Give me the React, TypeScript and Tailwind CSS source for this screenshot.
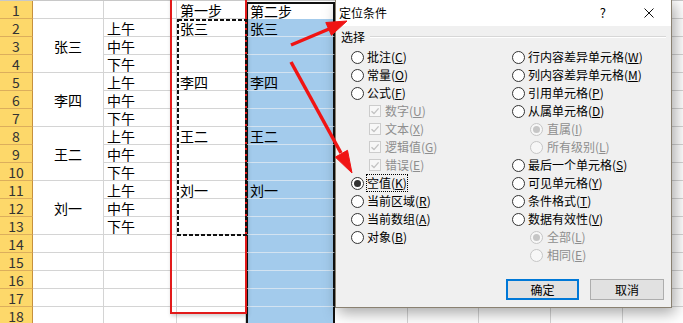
import clsx from 'clsx'

const names: Record<number, string> = { 2: '张三', 5: '李四', 8: '王二', 11: '刘一' }
const halves = ['上午', '中午', '下午']

function Radio({ checked, disabled }: { checked?: boolean; disabled?: boolean }) {
  return (
    <span
      className={clsx(
        'flex h-[13px] w-[13px] shrink-0 items-center justify-center rounded-full border',
        disabled ? 'border-[#c6c6c6] bg-[#f7f7f7]' : 'border-[#333] bg-white'
      )}
    >
      {checked && <span className={clsx('h-[7px] w-[7px] rounded-full', disabled ? 'bg-[#c6c6c6]' : 'bg-[#333]')} />}
    </span>
  )
}

function Check() {
  return (
    <span className="flex h-[12px] w-[12px] shrink-0 items-center justify-center border border-[#cccccc] bg-[#f7f7f7]">
      <svg width="10" height="10" viewBox="0 0 10 10">
        <path d="M1.5 5.2 L4 7.6 L8.6 2.4" fill="none" stroke="#c2c2c2" strokeWidth="1.4" />
      </svg>
    </span>
  )
}

function Label({ text, k, disabled, focus }: { text: string; k: string; disabled?: boolean; focus?: boolean }) {
  return (
    <span className={clsx('whitespace-nowrap leading-[16px]', disabled && 'text-[#8e8e8e]', focus && 'outline outline-1 outline-dotted outline-black')}>
      {text}(<span className="underline">{k}</span>)
    </span>
  )
}

type Opt = { text: string; k: string; kind: 'radio' | 'check' | 'sub'; checked?: boolean; disabled?: boolean; focus?: boolean }

const leftOpts: Opt[] = [
  { text: '批注', k: 'C', kind: 'radio' },
  { text: '常量', k: 'O', kind: 'radio' },
  { text: '公式', k: 'F', kind: 'radio' },
  { text: '数字', k: 'U', kind: 'check', disabled: true },
  { text: '文本', k: 'X', kind: 'check', disabled: true },
  { text: '逻辑值', k: 'G', kind: 'check', disabled: true },
  { text: '错误', k: 'E', kind: 'check', disabled: true },
  { text: '空值', k: 'K', kind: 'radio', checked: true, focus: true },
  { text: '当前区域', k: 'R', kind: 'radio' },
  { text: '当前数组', k: 'A', kind: 'radio' },
  { text: '对象', k: 'B', kind: 'radio' },
]

const rightOpts: Opt[] = [
  { text: '行内容差异单元格', k: 'W', kind: 'radio' },
  { text: '列内容差异单元格', k: 'M', kind: 'radio' },
  { text: '引用单元格', k: 'P', kind: 'radio' },
  { text: '从属单元格', k: 'D', kind: 'radio' },
  { text: '直属', k: 'I', kind: 'sub', checked: true, disabled: true },
  { text: '所有级别', k: 'L', kind: 'sub', disabled: true },
  { text: '最后一个单元格', k: 'S', kind: 'radio' },
  { text: '可见单元格', k: 'Y', kind: 'radio' },
  { text: '条件格式', k: 'T', kind: 'radio' },
  { text: '数据有效性', k: 'V', kind: 'radio' },
  { text: '全部', k: 'L', kind: 'sub', checked: true, disabled: true },
  { text: '相同', k: 'E', kind: 'sub', disabled: true },
]

function OptRow({ o }: { o: Opt }) {
  return (
    <div className={clsx('flex h-[18px] items-center', o.kind === 'radio' ? 'gap-[3px]' : 'gap-[4px] pl-[18px]')}>
      {o.kind === 'check' ? <Check /> : <Radio checked={o.checked} disabled={o.disabled} />}
      <Label text={o.text} k={o.k} disabled={o.disabled} focus={o.focus} />
    </div>
  )
}

function Sheet() {
  const cells: React.ReactNode[] = []
  for (let r = 1; r <= 18; r++) {
    cells.push(
      <div key={`h${r}`} className="flex items-end justify-center border-r border-b border-r-[#c6903e] border-b-[#dcae5c] bg-[#fdd86a] text-[14px] leading-[16px] text-[#333]">
        {r}
      </div>
    )
    if (names[r]) {
      cells.push(
        <div key={`a${r}`} className="row-span-3 flex items-center justify-center border-r border-b border-[#d4d4d4] leading-[16px]">
          {names[r]}
        </div>
      )
    } else if (r === 1 || r >= 14) {
      cells.push(<div key={`a${r}`} className="border-r border-b border-[#d4d4d4]" />)
    }
    cells.push(
      <div key={`b${r}`} className="flex items-end border-r border-b border-[#d4d4d4] pl-[3px] leading-[16px]">
        {r >= 2 && r <= 13 ? halves[(r - 2) % 3] : ''}
      </div>
    )
    cells.push(
      <div key={`c${r}`} className="flex items-end border-r border-b border-[#d4d4d4] pl-[3px] leading-[16px]">
        {r === 1 ? '第一步' : names[r] ?? ''}
      </div>
    )
    cells.push(
      <div
        key={`d${r}`}
        className={clsx(
          'flex items-end border-x-2 border-x-[#111] pl-[2px]',
          r === 1 ? 'mt-[1px] border-t-2 border-t-[#111] bg-white leading-[15px]' : 'border-b border-b-[#d3e3f1] bg-[#a3cbec] leading-[16px]'
        )}
      >
        {r === 1 ? '第二步' : names[r] ?? ''}
      </div>
    )
    for (let c = 0; c < 5; c++) {
      cells.push(<div key={`x${r}-${c}`} className="border-r border-b border-[#d4d4d4]" />)
    }
  }
  return (
    <div className="grid grid-cols-[33px_71px_73px_69px_89px_73px_71px_72px_72px_72px] grid-rows-[repeat(18,18px)] border-t border-[#c8c8c8] text-[14px] text-black">
      {cells}
    </div>
  )
}

function Dialog() {
  return (
    <div className="absolute left-[335px] top-[-1px] z-10 flex h-[309px] w-[337px] flex-col border border-[#8a8171] bg-[#f0f0f0] text-[12px] text-black shadow-[3px_5px_14px_rgba(0,0,0,0.35)]">
      <div className="flex h-[26px] items-center bg-white pl-[3px]">
        <span className="leading-[16px]">定位条件</span>
        <span className="ml-auto mr-[38px] text-[13px] leading-[16px]">?</span>
        <svg width="10" height="10" viewBox="0 0 10 10" className="mr-[17px]">
          <path d="M0.5 0.5 L9.5 9.5 M9.5 0.5 L0.5 9.5" stroke="#111" strokeWidth="1" />
        </svg>
      </div>
      <div className="mx-[5px] mt-[3px] flex h-[16px] items-center gap-[5px]">
        <span className="leading-[16px]">选择</span>
        <div className="h-[2px] flex-1 border-t border-b border-t-[#d7d7d7] border-b-white" />
      </div>
      <div className="mt-[3px] flex pl-[15px]">
        <div className="flex w-[161px] flex-col">
          {leftOpts.map((o) => <OptRow key={o.text} o={o} />)}
        </div>
        <div className="flex flex-col">
          {rightOpts.map((o) => <OptRow key={o.text} o={o} />)}
        </div>
      </div>
      <div className="mt-auto flex justify-end gap-[11px] pr-[7px] pb-[7px]">
        <button className="flex h-[21px] w-[73px] items-center justify-center border-2 border-[#0078d7] bg-[#e1e1e1] leading-[16px]">确定</button>
        <button className="flex h-[21px] w-[74px] items-center justify-center border border-[#adadad] bg-[#e1e1e1] leading-[16px]">取消</button>
      </div>
    </div>
  )
}

export default function App() {
  return (
    <div
      className="relative h-[323px] w-[683px] overflow-hidden bg-white"
      style={{ fontFamily: '"Noto Sans CJK SC", "Liberation Sans", sans-serif' }}
    >
      <Sheet />
      {/* red frame around step one column */}
      <div className="absolute left-[170px] top-[-4px] h-[318px] w-[77px] border-2 border-[#e21a1a] shadow-[1px_2px_4px_rgba(0,0,0,0.2)]" />
      {/* marching ants around C2:C13 */}
      <svg className="absolute left-[177px] top-[19px]" width="70" height="217">
        <rect x="1" y="1" width="68" height="215" fill="none" stroke="#111" strokeWidth="2" strokeDasharray="4 2" />
      </svg>
      <Dialog />
      <svg className="pointer-events-none absolute left-0 top-0 z-20" width="683" height="323">
        <g fill="#f01414" stroke="#f01414">
          <line x1="291" y1="45" x2="329" y2="29" strokeWidth="3.5" />
          <polygon points="347,21 331.4,35.3 325.8,22.5" strokeWidth="1" />
          <line x1="291" y1="62" x2="341" y2="153" strokeWidth="3.5" />
          <polygon points="352,173 347.5,150.3 335.3,157.1" strokeWidth="1" />
        </g>
      </svg>
    </div>
  )
}
